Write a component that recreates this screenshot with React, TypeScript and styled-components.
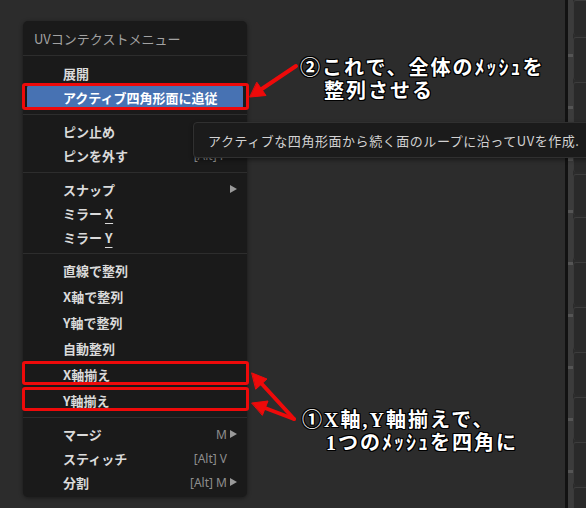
import React from "react";
import styled, { createGlobalStyle } from "styled-components";

const GlobalStyle = createGlobalStyle`
  html, body {
    margin: 0;
    padding: 0;
    background: #2c2c2c;
  }
  body {
    font-family: "Noto Sans CJK JP", "Noto Sans", sans-serif;
  }
`;

type Item = {
  label: string;
  accessKey?: string;
  shortcut?: string;
  sub?: boolean;
  active?: boolean;
  marked?: boolean;
};

type Group = {
  rowHeight: number;
  gapBefore?: number;
  items: Item[];
};

const groups: Group[] = [
  {
    rowHeight: 24,
    items: [
      { label: "展開" },
      { label: "アクティブ四角形面に追従", active: true, marked: true },
    ],
  },
  {
    rowHeight: 24,
    gapBefore: 10,
    items: [
      { label: "ピン止め", shortcut: "P" },
      { label: "ピンを外す", shortcut: "[Alt] P" },
    ],
  },
  {
    rowHeight: 24,
    gapBefore: 10,
    items: [
      { label: "スナップ", sub: true },
      { label: "ミラー ", accessKey: "X" },
      { label: "ミラー ", accessKey: "Y" },
    ],
  },
  {
    rowHeight: 26,
    gapBefore: 8,
    items: [
      { label: "直線で整列" },
      { label: "X軸で整列" },
      { label: "Y軸で整列" },
      { label: "自動整列" },
      { label: "X軸揃え", marked: true },
      { label: "Y軸揃え", marked: true },
    ],
  },
  {
    rowHeight: 24,
    gapBefore: 9,
    items: [
      { label: "マージ", shortcut: "M", sub: true },
      { label: "スティッチ", shortcut: "[Alt] V" },
      { label: "分割", shortcut: "[Alt] M", sub: true },
    ],
  },
];

const cellHeights = [34, 42, 44, 42, 40, 42, 42, 42, 42, 42, 42, 42, 40];

const Page = styled.div`
  position: relative;
  display: flex;
  width: 586px;
  height: 508px;
  overflow: hidden;
  background: #2c2c2c;
`;

const Canvas = styled.div`
  flex: 1;
  box-sizing: border-box;
  padding: 21px 0 0 23px;
`;

const Divider = styled.div`
  width: 3px;
  background: #121212;
`;

const Rail = styled.div`
  width: 5px;
  background: repeating-linear-gradient(
    to bottom,
    #3c3c3c 0 49px,
    #555555 49px 52px
  );
  background-position: 0 5px;
`;

const Cells = styled.div`
  width: 13px;
  display: flex;
  flex-direction: column;
  gap: 2px;
`;

const Cell = styled.div<{ $h: number }>`
  height: ${(p) => p.$h}px;
  flex-shrink: 0;
  background: #2a2a2a;
  border-top: 1px solid #3d3d3d;
  border-left: 1px solid #3a3a3a;
  border-radius: 3px 0 0 3px;
`;

const Menu = styled.div`
  width: 224px;
  background: #1a1a1a;
  border-radius: 5px;
  box-shadow: 0 1px 4px rgba(0, 0, 0, 0.45);
  padding-bottom: 3px;
`;

const MenuTitle = styled.div`
  height: 34px;
  display: flex;
  align-items: center;
  padding-left: 11px;
  border-bottom: 1px solid #2d2d2d;
  color: #a2a2a2;
  font-size: 13px;
`;

const MenuBody = styled.div`
  padding-top: 5px;
`;

const Separator = styled.div<{ $gap: number }>`
  height: ${(p) => p.$gap}px;
  display: flex;
  align-items: center;

  &::after {
    content: "";
    flex: 1;
    height: 1px;
    background: #2d2d2d;
  }
`;

const Row = styled.div<{
  $h: number;
  $active?: boolean;
  $marked?: boolean;
  $tall?: boolean;
}>`
  position: relative;
  height: ${(p) => p.$h}px;
  margin: 0 4px;
  padding: 0 6px 0 36px;
  display: flex;
  align-items: center;
  border-radius: 3px;
  background: ${(p) => (p.$active ? "#4772b3" : "transparent")};
  color: ${(p) => (p.$active ? "#ffffff" : "#dadada")};
  font-size: 13px;
  font-weight: 700;

  &::after {
    content: "";
    display: ${(p) => (p.$marked ? "block" : "none")};
    position: absolute;
    left: -5px;
    right: -6px;
    top: ${(p) => (p.$tall ? "0" : "-2px")};
    bottom: ${(p) => (p.$tall ? "2px" : "-1px")};
    border: 3px solid #ee0a0a;
    border-radius: 3px;
    pointer-events: none;
  }
`;

const Label = styled.span`
  white-space: pre;
`;

const Key = styled.span`
  text-decoration: underline;
  text-underline-offset: 4px;
`;

const Shortcut = styled.span`
  margin-left: auto;
  color: #8e8e8e;
  font-family: "Noto Sans", sans-serif;
  font-size: 12px;
  font-weight: 400;
`;

const ArrowSlot = styled.span`
  width: 10px;
  display: flex;
  justify-content: flex-end;
  color: #9a9a9a;
`;

const Tooltip = styled.div`
  position: absolute;
  left: 193px;
  top: 122px;
  width: 430px;
  height: 36px;
  box-sizing: border-box;
  display: flex;
  align-items: center;
  padding-left: 14px;
  background: #1b1b1b;
  border: 1px solid #303030;
  border-radius: 4px;
  box-shadow: 0 2px 4px rgba(0, 0, 0, 0.4);
  color: #d2d2d2;
  font-size: 13px;
  letter-spacing: 0.55px;
  white-space: nowrap;
  z-index: 2;
`;

const Callout = styled.div<{ $x: number; $y: number }>`
  position: absolute;
  left: ${(p) => p.$x}px;
  top: ${(p) => p.$y}px;
  color: #ffffff;
  font-family: "Liberation Serif", "Noto Sans CJK JP", serif;
  font-weight: 700;
  font-size: 20px;
  line-height: 22.5px;
  letter-spacing: 2px;
  white-space: nowrap;
  text-shadow: 1px 0 0 #000, -1px 0 0 #000, 0 1px 0 #000, 0 -1px 0 #000,
    1px 1px 0 #000, -1px -1px 0 #000, 1px -1px 0 #000, -1px 1px 0 #000;
  z-index: 3;
`;

const Indent = styled.div`
  padding-left: 24px;
`;

const Arrows = styled.svg`
  position: absolute;
  left: 0;
  top: 0;
  pointer-events: none;
  z-index: 4;
`;

const SubArrow = () => (
  <svg width="7" height="8" viewBox="0 0 7 8">
    <polygon points="0,0 7,4 0,8" fill="currentColor" />
  </svg>
);

const App = () => {
  return (
    <>
      <GlobalStyle />
      <Page>
        <Canvas>
          <Menu>
            <MenuTitle>UVコンテクストメニュー</MenuTitle>
            <MenuBody>
              {groups.map((group, gi) => (
                <React.Fragment key={gi}>
                  {group.gapBefore && <Separator $gap={group.gapBefore} />}
                  {group.items.map((item, ii) => (
                    <Row
                      key={ii}
                      $h={group.rowHeight}
                      $active={item.active}
                      $marked={item.marked}
                      $tall={group.rowHeight > 24}
                    >
                      <Label>
                        {item.label}
                        {item.accessKey && <Key>{item.accessKey}</Key>}
                      </Label>
                      <Shortcut>{item.shortcut}</Shortcut>
                      <ArrowSlot>{item.sub && <SubArrow />}</ArrowSlot>
                    </Row>
                  ))}
                </React.Fragment>
              ))}
            </MenuBody>
          </Menu>
        </Canvas>
        <Divider />
        <Rail />
        <Cells>
          {cellHeights.map((h, i) => (
            <Cell key={i} $h={h} />
          ))}
        </Cells>

        <Tooltip>アクティブな四角形面から続く面のループに沿ってUVを作成.</Tooltip>

        <Callout $x={300} $y={57}>
          ②これで、全体のﾒｯｼｭを
          <Indent>整列させる</Indent>
        </Callout>
        <Callout $x={302} $y={409}>
          ①X軸,Y軸揃えで、
          <Indent>1つのﾒｯｼｭを四角に</Indent>
        </Callout>

        <Arrows width="586" height="508" viewBox="0 0 586 508">
          <g stroke="#ee0a0a" strokeWidth="4" strokeLinecap="round" fill="#ee0a0a">
            <line x1="296" y1="66" x2="261" y2="89.5" />
            <polygon points="250,97 266,95.5 257,82.5" strokeWidth="1" />
            <line x1="294" y1="419" x2="261" y2="383" />
            <polygon points="252,373 267,379 256,389" strokeWidth="1" />
            <line x1="294" y1="419" x2="265" y2="408" />
            <polygon points="252,403 268,401 262.5,415" strokeWidth="1" />
          </g>
        </Arrows>
      </Page>
    </>
  );
};

export default App;
